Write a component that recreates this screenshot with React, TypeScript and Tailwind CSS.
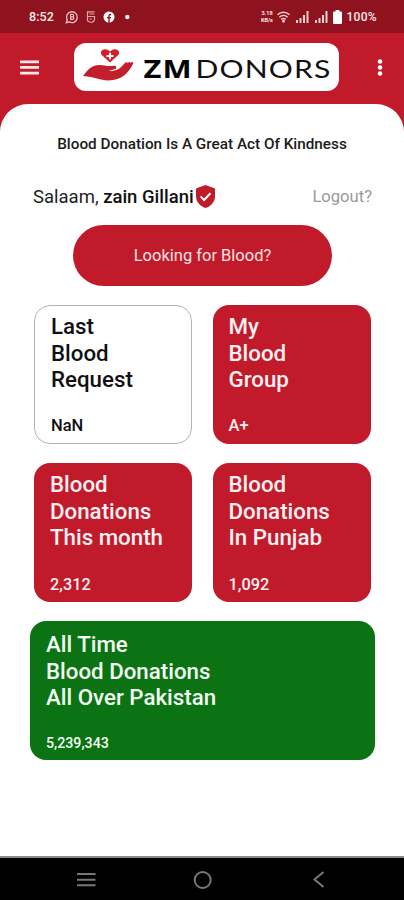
import { ReactNode } from "react";

const Logo = () => (
  <div className="flex h-12 w-[265px] items-center rounded-xl bg-white">
    <svg width="265" height="48" viewBox="0 0 265 48">
      <path
        d="M36 19.500 L27.800 12 C24.500 8.300 30.500 3.300 36 8.500 C41.500 3.300 47.500 8.300 44.200 12 Z"
        fill="#d41f2b"
      />
      <path d="M35 9.700h2v2.300h2.500v2H37v2.300h-2v-2.300h-2.500v-2H35z" fill="#fff" />
      <path
        d="M9 33 C14 26 19 21.500 26 22 C30 22.200 33 23.600 40 22.800 C43 22.600 43.200 25.500 40.500 26.300 L34.500 28 C42 28.400 46.500 25.500 49.500 21.500 C52 18.300 54 19 53.400 20.500 C54.600 18.500 56.200 18.400 56 20 C59 18 60 19 58.700 21.500 C54.500 29.500 48.500 37.400 34 37.400 C26 37.400 21 34 9 33 Z"
        fill="#c11f2b"
      />
      <text
        x="69.5"
        y="34.8"
        fontSize="25"
        letterSpacing="0.8"
        textLength="49"
        lengthAdjust="spacingAndGlyphs"
        className="font-['Open_Sans'] font-bold"
        fill="#050505"
      >
        ZM
      </text>
      <text
        x="121.5"
        y="35"
        fontSize="25.5"
        letterSpacing="1"
        textLength="136"
        lengthAdjust="spacingAndGlyphs"
        className="font-['Lato'] font-normal"
        fill="#111"
      >
        DONORS
      </text>
    </svg>
  </div>
);

const Signal = () => (
  <svg width="13" height="12" viewBox="0 0 13 12" fill="#f3cfd2">
    <path d="M0 9h2v3H0zM3.5 7h2v5h-2zM7 4h2v8H7zM10.5 0h2v12h-2z" />
  </svg>
);

const StatusBar = () => (
  <div className="flex h-[33px] items-center bg-[#8f131f] pt-px pr-[27px] pl-[29px] text-[#fbe9ea]">
    <span className="w-9 text-[12.5px] font-medium tracking-[0.1px]">8:52</span>
    <svg width="66" height="14" viewBox="0 0 66 14" fill="none">
      <path d="M1.3 12.7 L2.2 9.8 A5.4 5.4 0 1 1 4.3 11.9 Z" stroke="#efc5c9" strokeWidth="1.3" />
      <path d="M5.6 4.4h1.8a1.2 1.2 0 0 1 0 2.5H5.6zM5.6 6.9h2a1.2 1.2 0 0 1 0 2.5h-2z" stroke="#efc5c9" strokeWidth="1.1" />
      <path d="M29.500 1.800h-7v9c1 .9 2.200 1.400 3.500 1.700 2-.5 3.500-1.300 3.500-3V6.500h-7M24.500 4h5M24.500 9h2.500" stroke="#e0a4aa" strokeWidth="1.2" />
      <circle cx="44" cy="7" r="5.5" fill="#fff" />
      <path d="M44 12.5V6.3c0-1.3.7-1.9 2.2-1.8M42 7.6h4" stroke="#8f131f" strokeWidth="1.4" />
      <circle cx="62.3" cy="7" r="2.2" fill="#fbe9ea" />
    </svg>
    <div className="ml-auto flex items-center">
      <div className="flex w-[19px] flex-col text-center text-[5.5px] leading-[7px] font-bold">
        <div>3.18</div>
        <div>KB/s</div>
      </div>
      <svg className="mr-[6px]" width="13" height="12" viewBox="0 0 13 12" fill="none" stroke="#f3cfd2" strokeWidth="1.5">
        <path d="M.5 3.8C4 .5 9 .5 12.5 3.8M2.4 6.2c2.4-2.2 5.8-2.2 8.2 0M4.3 8.4c1.3-1.1 3.1-1.1 4.4 0" />
        <circle cx="6.5" cy="10.3" r=".7" />
      </svg>
      <Signal />
      <span className="w-[6px]" />
      <Signal />
      <svg className="mr-[5px] ml-[5px]" width="9" height="14" viewBox="0 0 9 14" fill="#fff">
        <path d="M2.6 0h3.8v1.5H8a1 1 0 0 1 1 1V13a1 1 0 0 1-1 1H1a1 1 0 0 1-1-1V2.500a1 1 0 0 1 1-1h1.600z" />
      </svg>
      <span className="text-[12px] font-medium tracking-[0.3px]">100%</span>
    </div>
  </div>
);

const Header = () => (
  <div className="flex h-[71px] items-start pt-[10px] pr-[20px] pl-[20px]">
    <svg className="mt-[17px]" width="19" height="15" viewBox="0 0 19 15" fill="#fbe9ea">
      <path d="M0 .5h19v2.700H0zM0 6.100h19v2.700H0zM0 11.700h19v2.700H0z" />
    </svg>
    <div className="ml-[35px]">
      <Logo />
    </div>
    <svg className="mt-[15px] ml-auto" width="8" height="19" viewBox="0 0 8 19" fill="#fff">
      <circle cx="4" cy="3.500" r="2.300" />
      <circle cx="4" cy="9.500" r="2.300" />
      <circle cx="4" cy="15.500" r="2.300" />
    </svg>
  </div>
);

const Card = ({
  lines,
  value,
  className,
}: {
  lines: string[];
  value: ReactNode;
  className: string;
}) => (
  <div className={`flex flex-col ${className}`}>
    {lines.map((line) => (
      <div key={line} className="text-[22.3px] leading-[26.7px] font-medium whitespace-nowrap">
        {line}
      </div>
    ))}
    {value}
  </div>
);

const App = () => {
  return (
    <div className="flex h-[900px] w-[404px] flex-col overflow-hidden bg-[#c01a2b] font-['Roboto',sans-serif]">
      <StatusBar />
      <Header />
      <main className="flex flex-1 flex-col rounded-t-[28px] bg-white">
        <p className="mt-[30px] text-center text-[15.3px] leading-5 font-medium text-[#1b1b1b]">
          Blood Donation Is A Great Act Of Kindness
        </p>
        <div className="mt-[29px] flex h-[26px] items-center pr-[32px] pl-[33px] text-[#1f1f1f]">
          <span className="pt-[3px] text-[18.5px] whitespace-nowrap">
            Salaam, <span className="font-medium text-[#111]">zain Gillani</span>
          </span>
          <svg className="ml-[2px]" width="19" height="23" viewBox="0 0 19 23">
            <path d="M9.500 0 19 3.500V11c0 6-4 10.200-9.500 12C4 21.200 0 17 0 11V3.500z" fill="#c01a2b" />
            <path d="m4.600 11.400 3.500 3.600 6.400-6.700" fill="none" stroke="#fff" strokeWidth="2" />
          </svg>
          <span className="ml-auto pt-[2px] text-[16.6px] text-[#9a9a9a]">Logout?</span>
        </div>
        <button className="mt-4 ml-[73px] h-[61px] w-[259px] rounded-full bg-[#c01a2b] pt-[2px] text-[16.5px] text-[#fbe3e5]">
          Looking for Blood?
        </button>
        <div className="mt-[19px] ml-[34px] grid grid-cols-[158px_158px] gap-x-[21px] gap-y-[19px]">
          <Card
            lines={["Last", "Blood", "Request"]}
            value={<div className="mt-[23px] text-[16.5px] leading-5 font-medium">NaN</div>}
            className="h-[139px] rounded-[16px] border border-[#b5b5b5] bg-white pt-[7px] pl-4 text-[#111]"
          />
          <Card
            lines={["My", "Blood", "Group"]}
            value={<div className="mt-[23px] text-[16.5px] leading-5 font-medium">A+</div>}
            className="h-[139px] rounded-[16px] bg-[#c01a2b] pt-[8px] pl-[15.5px] text-[#fff0f1]"
          />
          <Card
            lines={["Blood", "Donations", "This month"]}
            value={<div className="mt-[24px] text-[16.3px] leading-5 font-medium">2,312</div>}
            className="h-[139px] rounded-[16px] bg-[#c01a2b] pt-[8px] pl-4 text-[#fff0f1]"
          />
          <Card
            lines={["Blood", "Donations", "In Punjab"]}
            value={<div className="mt-[24px] text-[16.3px] leading-5 font-medium">1,092</div>}
            className="h-[139px] rounded-[16px] bg-[#c01a2b] pt-[8px] pl-[15.5px] text-[#fff0f1]"
          />
        </div>
        <Card
          lines={["All Time", "Blood Donations", "All Over Pakistan"]}
          value={<div className="mt-[22px] text-[14.2px] leading-5 font-medium">5,239,343</div>}
          className="mt-[19px] ml-[30px] h-[139px] w-[345px] rounded-[16px] bg-[#0b7314] pt-[10px] pl-4 text-[#f4fff4]"
        />
      </main>
      <nav className="flex h-11 items-center border-t-2 border-[#8a8a8a] bg-black pt-px pr-[76px] pl-[77px]">
        <svg width="250" height="18" viewBox="0 0 250 18" fill="none" stroke="#777" strokeWidth="2">
          <path d="M0 3h18.500M0 8.700h18.500M0 14.300h18.500" />
          <circle cx="125.700" cy="9" r="8" />
          <path d="M246.500 1 237.500 8.500 246.500 16" />
        </svg>
      </nav>
    </div>
  );
};

export default App;
